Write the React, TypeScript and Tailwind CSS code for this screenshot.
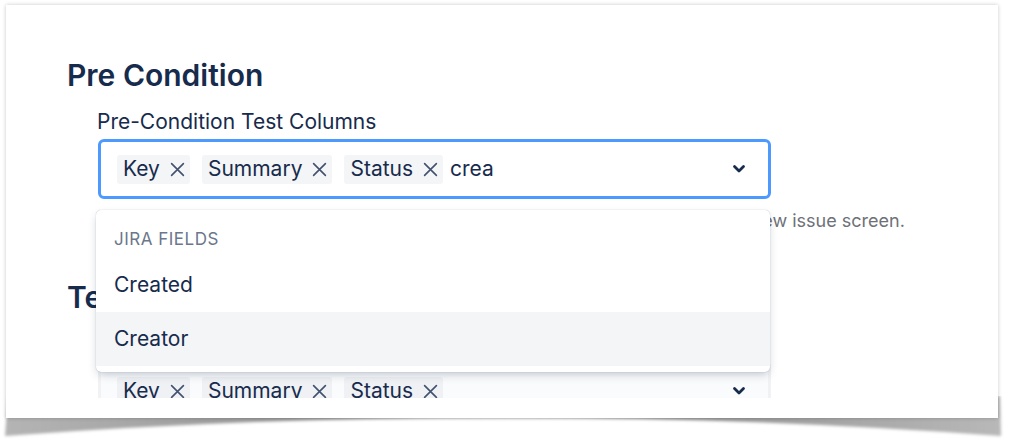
import React from 'react';

const FONT = "font-['Inter','Noto_Sans',sans-serif]";

function CloseIcon() {
  return (
    <svg width="15" height="15" viewBox="0 0 14 14" className="shrink-0">
      <path d="M1.5 1.5L12.5 12.5M12.5 1.5L1.5 12.5" stroke="#42526E" strokeWidth="1.5" strokeLinecap="round" />
    </svg>
  );
}

function Chevron() {
  return (
    <svg width="14" height="10" viewBox="0 0 14 10" className="shrink-0">
      <path d="M2.5 2.5L7 7L11.5 2.5" fill="none" stroke="#172B4D" strokeWidth="2.8" strokeLinecap="round" strokeLinejoin="round" />
    </svg>
  );
}

function Tag({ label, muted }: { label: string; muted?: boolean }) {
  return (
    <span
      className={`flex items-center h-[29px] pl-[6px] pr-[5px] gap-[10px] rounded-[3px] text-[21px] text-[#172B4D] ${
        muted ? 'bg-[#EFF1F4]' : 'bg-[#F4F5F7]'
      }`}
    >
      {label}
      <CloseIcon />
    </span>
  );
}

const columns = ['Key', 'Summary', 'Status'];

function ColumnsSelect({ focused, query }: { focused?: boolean; query?: string }) {
  return (
    <div
      className={`flex items-center w-[673px] h-[60px] pl-[16px] pr-[22px] rounded-[6px] border-[3px] ${
        focused ? 'border-[#4C9AFF] bg-white' : 'border-[#F1F2F4] bg-[#FAFBFC]'
      }`}
    >
      <div className="flex items-center gap-[12px]">
        {columns.map((c) => (
          <Tag key={c} label={c} muted={!focused} />
        ))}
      </div>
      {query && <span className="ml-[7px] text-[21px] text-[#172B4D]">{query}</span>}
      <div className="flex-1" />
      <Chevron />
    </div>
  );
}

function Section({
  title,
  label,
  help,
  children,
}: {
  title: string;
  label: string;
  help?: string;
  children: React.ReactNode;
}) {
  return (
    <section>
      <h2 className="text-[30px] leading-[36px] font-semibold text-[#172B4D]">{title}</h2>
      <div className="ml-[31px] mt-[15px]">
        <div className="text-[21px] leading-[28px] text-[#172B4D] ml-[-1px]">{label}</div>
        <div className="relative mt-[3px]">{children}</div>
        {help && (
          <p className="mt-[10px] whitespace-nowrap text-[18px] leading-[24px] text-[#6E7178]">{help}</p>
        )}
      </div>
    </section>
  );
}

function Dropdown() {
  return (
    <div className="absolute left-[-2px] top-[71px] z-10 w-[674px] rounded-[5px] bg-white pb-[6px] shadow-[0_4px_10px_-2px_rgba(9,30,66,0.25),0_0_1px_rgba(9,30,66,0.35)]">
      <div className="h-[48px] pl-[18px] pt-[19px] text-[17px] leading-[20px] uppercase text-[#6B778C] tracking-[0.5px]">
        Jira Fields
      </div>
      <div className="h-[54px] flex items-center pl-[18px] text-[21px] text-[#172B4D]">Created</div>
      <div className="h-[54px] flex items-center pl-[18px] text-[21px] text-[#172B4D] bg-[#F4F5F7]">Creator</div>
    </div>
  );
}

export default function App() {
  return (
    <div className={`relative w-[1012px] h-[447px] bg-white overflow-hidden ${FONT}`}>
      {/* curled page shadow */}
      <svg className="absolute left-0 top-[396px]" width="1012" height="51" viewBox="0 0 1012 51">
        <defs>
          <filter id="blur" x="-5%" y="-50%" width="110%" height="200%">
            <feGaussianBlur stdDeviation="1.8" />
          </filter>
          <linearGradient id="fade" x1="0" y1="0" x2="1" y2="0">
            <stop offset="0" stopColor="#b4b4b4" />
            <stop offset="0.5" stopColor="#808080" />
            <stop offset="1" stopColor="#b8b8b8" />
          </linearGradient>
        </defs>
        <path d="M8 0 L1000 0 L1001 40 Q 503 3 5 40 Z" fill="url(#fade)" filter="url(#blur)" />
      </svg>

      <div className="relative ml-[6px] mt-[5px] w-[992px] h-[413px] bg-white shadow-[0_0_4px_rgba(0,0,0,0.22)]">
        <div className="h-[393px] overflow-hidden pl-[61px] pt-[52px]">
          <Section
            title="Pre Condition"
            label="Pre-Condition Test Columns"
            help="Columns shown in the Pre-Condition table of the Pre-Condition issue on the view issue screen."
          >
            <ColumnsSelect focused query="crea" />
            <Dropdown />
          </Section>
          <div className="mt-[46px]">
            <Section title="Test Set" label="Test Set Test Columns">
              <ColumnsSelect />
            </Section>
          </div>
        </div>
      </div>
    </div>
  );
}
